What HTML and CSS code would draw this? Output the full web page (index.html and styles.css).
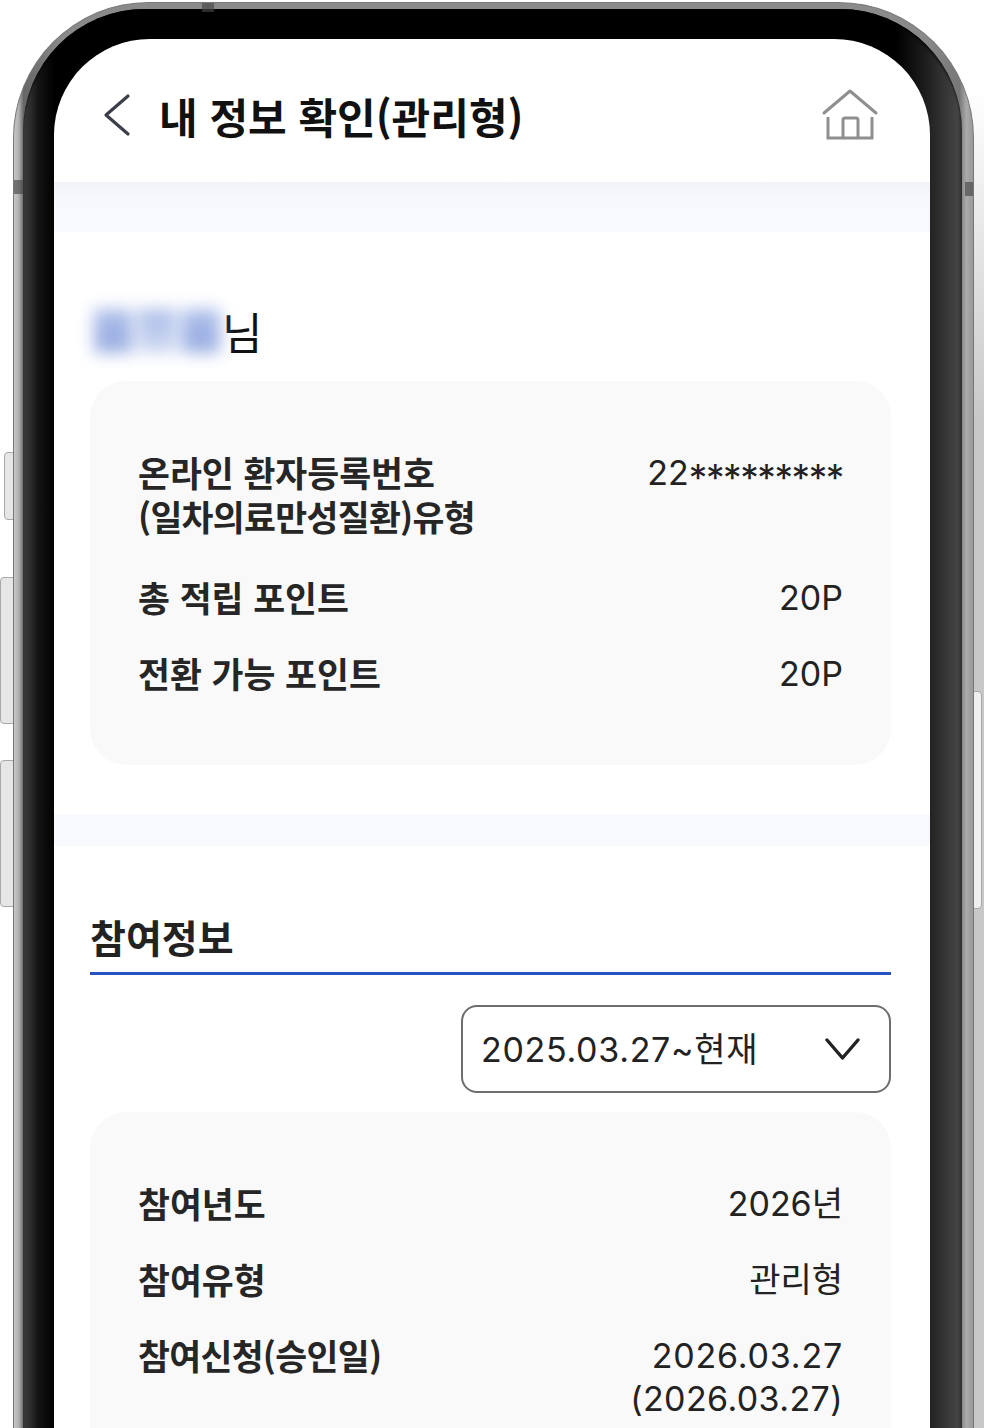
FILE: index.html
```html
<!DOCTYPE html>
<html lang="ko">
<head>
    <meta charset="UTF-8">
    <meta name="viewport" content="width=device-width, initial-scale=1.0">
    <title>내 정보 확인(관리형)</title>
    <link rel="stylesheet" href="styles.css">
</head>
<body>

    <div class="stage">
        <!-- Side keys -->
        <span class="key key-power"></span>
        <span class="key key-up"></span>
        <span class="key key-down"></span>
        <span class="key key-right"></span>

        <div class="phone">
            <div class="phone-body">
                <div class="screen">

                    <!-- Header -->
                    <div class="header">
                        <svg class="back-icon" width="30" height="44" viewBox="0 0 30 44">
                            <path d="M26 3 L4 22 L26 41" fill="none" stroke="#3b3f4a" stroke-width="3.2" stroke-linecap="round" stroke-linejoin="round"/>
                        </svg>
                        <h1 class="title">내 정보 확인(관리형)</h1>
                        <svg class="home-icon" width="58" height="54" viewBox="0 0 58 54">
                            <path d="M3 25 L29 3 L55 25" fill="none" stroke="#8f8f8f" stroke-width="3" stroke-linecap="round" stroke-linejoin="round"/>
                            <path d="M7 29 V50 H51 V29 M22 50 V32 Q22 30 24 30 H35 Q37 30 37 32 V50" fill="none" stroke="#8f8f8f" stroke-width="3"/>
                        </svg>
                    </div>
                    <div class="band band-top"></div>

                    <!-- User -->
                    <div class="content">
                        <div class="user-name">
                            <span class="blur-name"><i></i><i class="light"></i><i></i></span>님
                        </div>
                        <div class="card card-info">
                            <div class="row row-multi">
                                <span class="label">온라인 환자등록번호<br><span class="tight">(일차의료만성질환)유형</span></span>
                                <span class="value">22<span class="mask">*********</span></span>
                            </div>
                            <div class="row">
                                <span class="label">총 적립 포인트</span>
                                <span class="value">20P</span>
                            </div>
                            <div class="row">
                                <span class="label">전환 가능 포인트</span>
                                <span class="value">20P</span>
                            </div>
                        </div>
                    </div>
                    <div class="band band-mid"></div>

                    <!-- Participation -->
                    <div class="content content-join">
                        <h2 class="section-title">참여정보</h2>
                        <div class="select-wrap">
                            <div class="select-box">
                                <span class="select-text">2025.03.27~현재</span>
                                <svg width="36" height="24" viewBox="0 0 36 24">
                                    <path d="M2 3 L17.5 21 L33 3" fill="none" stroke="#222" stroke-width="3.4" stroke-linecap="round" stroke-linejoin="round"/>
                                </svg>
                            </div>
                        </div>
                        <div class="card card-join">
                            <div class="row">
                                <span class="label">참여년도</span>
                                <span class="value">2026년</span>
                            </div>
                            <div class="row">
                                <span class="label">참여유형</span>
                                <span class="value">관리형</span>
                            </div>
                            <div class="row">
                                <span class="label tight">참여신청(승인일)</span>
                                <span class="value"><span class="date">2026.03.27</span><br><span class="date-sub">(2026.03.27)</span></span>
                            </div>
                        </div>
                    </div>

                </div>
            </div>
        </div>

        <!-- Antenna lines on the frame -->
        <span class="mark mark-top"></span>
        <span class="mark mark-left"></span>
        <span class="mark mark-right"></span>
    </div>

</body>
</html>
```

FILE: styles.css
```css
html, body {
    margin: 0;
    padding: 0;
    height: 1428px;
    overflow: hidden;
    background: #fff;
}

body {
    font-family: "Noto Sans CJK KR", sans-serif;
    color: #222;
}

.stage {
    position: relative;
    width: 984px;
    height: 1428px;
    overflow: hidden;
}

/* soft shadow to the right of the phone */
.stage::before {
    content: "";
    position: absolute;
    left: 970px;
    top: 90px;
    width: 14px;
    height: 1338px;
    background: linear-gradient(to bottom, #fff, #c8c8c8 330px);
}

/* Side keys */
.key {
    position: absolute;
    box-sizing: border-box;
    background: #e6e6e6;
    border: 1px solid #a8a8a8;
    border-radius: 4px 0 0 4px;
}

.key-power { left: 4px; top: 452px; width: 12px; height: 68px; }
.key-up { left: 0; top: 577px; width: 14px; height: 147px; }
.key-down { left: 0; top: 760px; width: 14px; height: 147px; }
.key-right { left: 972px; top: 691px; width: 10px; height: 218px; background: #efefef; border-radius: 0 4px 4px 0; }

/* Phone body */
.phone {
    position: absolute;
    left: 13px;
    top: 2px;
    box-sizing: border-box;
    width: 961px;
    height: 1500px;
    padding: 6px 11px 0 9px;
    border: 1px solid #777;
    border-bottom: 0;
    border-radius: 136px 136px 0 0;
    background: linear-gradient(to right, #c8c8c8 0, #b0b0b0 0.5%, #666 1%, #8a8a8a 5%, #8a8a8a 95%, #777 98.6%, #aaa 99.3%, #999 100%);
}

.phone-body {
    box-sizing: border-box;
    height: 1500px;
    padding: 30px 32px 0 31px;
    border-radius: 122px 122px 0 0;
    background: linear-gradient(to right, #3c3c3c 0, #2c2c2c 0.8%, #141414 1.6%, #000 3.4%, #000 93%, #1c1c1c 96%, #444 99.5%, #333 100%);
    box-shadow: inset 0 3px 3px -1px rgba(0, 0, 0, 0.9);
}

.screen {
    height: 1460px;
    background: #fff;
    border-radius: 96px 96px 0 0;
    overflow: hidden;
}

.mark {
    position: absolute;
    background: rgba(70, 70, 70, 0.65);
}

.mark-top { left: 202px; top: 3px; width: 12px; height: 9px; }
.mark-left { left: 14px; top: 180px; width: 9px; height: 14px; }
.mark-right { left: 965px; top: 182px; width: 8px; height: 14px; }

/* Header */
.header {
    box-sizing: border-box;
    display: flex;
    align-items: center;
    height: 143px;
    padding: 9px 51px 0 48px;
}

.back-icon {
    margin-right: 27px;
    flex-shrink: 0;
}

.title {
    flex: 1;
    margin: 0;
    font-size: 42px;
    font-weight: 700;
    color: #111;
    white-space: nowrap;
}

.band-top {
    height: 50px;
    background: linear-gradient(to bottom, #f2f3f6, #f8f9fd 40%);
}

.band-mid {
    height: 32px;
    background: #f8f9fd;
}

/* Content */
.content {
    padding: 64px 39px 49px 36px;
}

.content-join {
    padding-top: 62px;
}

.user-name {
    display: flex;
    align-items: center;
    height: 85px;
    padding-bottom: 16px;
    box-sizing: border-box;
    font-size: 44px;
    line-height: 1;
    color: #111;
}

.blur-name {
    display: flex;
    gap: 6px;
    margin: 0 2px 0 4px;
    filter: blur(8px);
}

.blur-name i {
    display: block;
    width: 38px;
    height: 44px;
    background: linear-gradient(to bottom, #afc0ea, #9db1e3 60%);
}

.blur-name i.light {
    background: linear-gradient(to bottom, #a9bce8, #d0daf2);
}

.card {
    padding: 69px 48px 38px;
    background: #f9f9f9;
    border-radius: 36px;
}

.row {
    display: flex;
    justify-content: space-between;
    align-items: flex-start;
    font-size: 34.7px;
    line-height: 44px;
    margin-bottom: 32px;
}

.row-multi {
    margin-bottom: 37px;
}

.label {
    font-weight: 700;
    color: #262626;
}

.tight {
    letter-spacing: -0.7px;
}

.value {
    text-align: right;
    font-family: Inter, "Noto Sans CJK KR", sans-serif;
    font-size: 34px;
    line-height: 43px;
    font-weight: 400;
    padding-top: 1px;
}

.mask {
    font-size: 37px;
    line-height: 0;
    letter-spacing: -1.4px;
    vertical-align: -6px;
}

.date {
    letter-spacing: 0.8px;
}

.date-sub {
    letter-spacing: 0.4px;
}

/* Section */
.section-title {
    margin: 0;
    padding-bottom: 8px;
    font-size: 39px;
    line-height: 56px;
    font-weight: 700;
    border-bottom: 3px solid #2653c0;
}

.select-wrap {
    display: flex;
    justify-content: flex-end;
    margin: 30px 0 19px;
}

.select-box {
    box-sizing: border-box;
    display: flex;
    align-items: center;
    justify-content: space-between;
    width: 430px;
    height: 88px;
    padding: 0 28px 0 18px;
    border: 2px solid #6e6e6e;
    border-radius: 16px;
    font-family: Inter, "Noto Sans CJK KR", sans-serif;
    font-size: 34px;
}

.select-text {
    margin-bottom: 4px;
    letter-spacing: 0.7px;
}
```
